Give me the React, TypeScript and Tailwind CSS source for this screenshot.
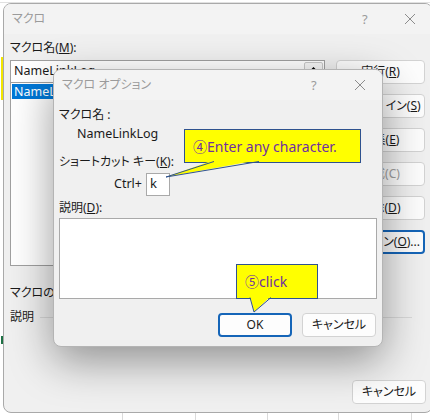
import React from "react";

const FONT = "[font-family:'Noto_Sans','Noto_Sans_CJK_JP',sans-serif] [font-feature-settings:'palt']";

const CloseIcon = () => (
  <svg width="12" height="12" viewBox="0 0 12 12">
    <path d="M1 1L11 11M11 1L1 11" stroke="#8c8c8c" strokeWidth="1" />
  </svg>
);

const TitleBar = ({ title, help, close }: { title: string; help: number; close: number }) => (
  <div className="relative h-[30px] flex items-center pl-[8px] text-[12px] text-[#9b9b9b]">
    <span>{title}</span>
    <span className="absolute top-[6px] text-[13px] text-[#9b9b9b]" style={{ left: help }}>?</span>
    <span className="absolute top-[9px]" style={{ left: close }}>
      <CloseIcon />
    </span>
  </div>
);

const Btn = ({
  children,
  focus,
  disabled,
  className = "",
}: {
  children: React.ReactNode;
  focus?: boolean;
  disabled?: boolean;
  className?: string;
}) => (
  <div
    className={`h-[24px] flex items-center justify-center rounded-[4px] bg-[#fdfdfd] text-[12px] ${
      focus ? "border-2 border-[#1565b8]" : "border border-[#d3d3d3]"
    } ${disabled ? "text-[#a0a0a0]" : "text-[#1a1a1a]"} ${className}`}
  >
    {children}
  </div>
);

const Callout = ({
  text,
  className,
  tail,
}: {
  text: string;
  className: string;
  tail: { x: number; w: number; tipX: number; tipY: number };
}) => (
  <div
    className={`absolute bg-[#ffff00] border border-[#2f528f] flex items-center pl-[8px] text-[14px] text-[#7030a0] ${className}`}
  >
    {text}
    <svg className="absolute overflow-visible left-0 top-full" width="1" height="1">
      <polygon
        points={`${tail.x},-2 ${tail.tipX},${tail.tipY} ${tail.x + tail.w},-2`}
        fill="#ffff00"
      />
      <path
        d={`M${tail.x} -0.5 L${tail.tipX} ${tail.tipY} L${tail.x + tail.w} -0.5`}
        stroke="#2f528f"
        strokeWidth="1"
        fill="none"
      />
    </svg>
  </div>
);

export default function App() {
  return (
    <div className={`relative w-[430px] h-[420px] overflow-hidden bg-white text-[#1a1a1a] ${FONT}`}>
      {/* excel sheet behind */}
      <div className="absolute left-0 top-0 w-full h-[3px] border-b border-[#e1e1e1]" />
      <div className="absolute left-[1px] top-[57px] w-[2px] h-[43px] bg-[#f2e600]" />
      <div className="absolute left-[1px] top-[336px] w-[2px] h-[8px] bg-[#1e7145]" />
      <div className="absolute left-0 top-[413px] w-full h-[7px] flex">
        <div className="w-[123px] border-r border-[#dadada]" />
        <div className="w-[73px] border-r border-[#dadada]" />
        <div className="w-[72px] border-r border-[#dadada]" />
        <div className="w-[71px] border-r border-[#dadada]" />
        <div className="w-[73px] border-r border-[#dadada]" />
      </div>

      {/* main macro dialog */}
      <div className="absolute left-[3px] top-[3px] w-[430px] h-[410px] rounded-[8px] border border-[#a9a9a9] bg-[#f0f0f0] flex flex-col overflow-hidden">
        <div className="bg-[#f3f3f3]">
          <TitleBar title="マクロ" help={358} close={400} />
        </div>
        <div className="flex flex-col flex-1 pl-[6px] pb-[8px]">
          <div className="mt-[6px] h-[16px] leading-[16px] text-[12px]">
            マクロ名(<u>M</u>):
          </div>
          <div className="mt-[4px] flex gap-[11px]">
            <div className="w-[315px] flex flex-col">
              <div className="h-[23px] border border-[#a0a0a0] bg-white flex items-center pl-[3px] pr-[1px] text-[12.5px]">
                <span className="flex-1">NameLinkLog</span>
                <span className="w-[19px] h-[19px] border border-[#c9c9c9] rounded-[2px] bg-[#f7f7f7] flex items-center justify-center">
                  <svg width="9" height="9" viewBox="0 0 9 9">
                    <polygon points="4.5,0 9,4.5 6.5,4.5 6.5,9 2.5,9 2.5,4.5 0,4.5" fill="#000" />
                  </svg>
                </span>
              </div>
              <div className="-mt-px h-[184px] border border-[#a0a0a0] bg-white p-[1px]">
                <div className="h-[15px] bg-[#0078d7] text-white text-[12.5px] leading-[15px] pl-[2px] w-[300px]">
                  NameLinkLog
                </div>
              </div>
            </div>
            <div className="w-[89px] flex flex-col gap-[10px]">
              <Btn>実行(<u>R</u>)</Btn>
              <Btn>ステップ イン(<u>S</u>)</Btn>
              <Btn>編集(<u>E</u>)</Btn>
              <Btn disabled>作成(C)</Btn>
              <Btn>削除(<u>D</u>)</Btn>
              <Btn focus>オプション(<u>O</u>)...</Btn>
            </div>
          </div>
          <div className="mt-[19px] h-[16px] leading-[16px] text-[12px]">
            マクロの保存先(<u>A</u>):
          </div>
          <div className="mt-[8px] h-[16px] flex items-center gap-[6px] text-[12px]">
            <span>説明</span>
            <div className="flex-1 h-px bg-[#d9d9d9] mr-[20px]" />
          </div>
          <div className="mt-auto flex justify-end pr-[6px]">
            <Btn className="w-[74px] h-[23px]">キャンセル</Btn>
          </div>
        </div>
      </div>

      {/* macro options dialog */}
      <div className="absolute left-[53px] top-[69px] w-[330px] h-[278px] rounded-[8px] border border-[#b4b4b4] bg-[#f0f0f0] shadow-[0_14px_44px_rgba(0,0,0,0.4)] flex flex-col overflow-hidden">
        <div className="bg-[#f3f3f3]">
          <TitleBar title="マクロ オプション" help={257} close={300} />
        </div>
        <div className="flex flex-col pl-[5px] pr-[5px] text-[12px]">
          <div className="mt-[7px] h-[16px] leading-[16px]">マクロ名 :</div>
          <div className="mt-[3px] h-[16px] leading-[16px] pl-[18px] text-[12.5px]">NameLinkLog</div>
          <div className="mt-[12px] h-[16px] leading-[16px]">
            ショートカット キー(<u>K</u>):
          </div>
          <div className="mt-[3px] h-[23px] flex items-center pl-[55px] gap-[4px]">
            <span className="text-[12.5px]">Ctrl+</span>
            <div className="w-[24px] h-[23px] border border-[#a9a9a9] bg-white pl-[3px] leading-[19px] text-[13px]">
              k
            </div>
          </div>
          <div className="mt-[4px] h-[16px] leading-[16px]">
            説明(<u>D</u>):
          </div>
          <div className="mt-[2px] h-[81px] w-[318px] border border-[#a9a9a9] bg-white" />
          <div className="mt-[14px] flex justify-end gap-[10px] pr-[1px]">
            <Btn focus className="w-[74px]">OK</Btn>
            <Btn className="w-[74px]">キャンセル</Btn>
          </div>
        </div>
      </div>

      {/* callouts */}
      <Callout
        text="④Enter any character."
        className="left-[184px] top-[129px] w-[177px] h-[34px]"
        tail={{ x: 29, w: 45, tipX: -19, tipY: 15 }}
      />
      <Callout
        text="⑤click"
        className="left-[236px] top-[264px] w-[82px] h-[35px]"
        tail={{ x: 13, w: 21, tipX: 17, tipY: 14 }}
      />
    </div>
  );
}
